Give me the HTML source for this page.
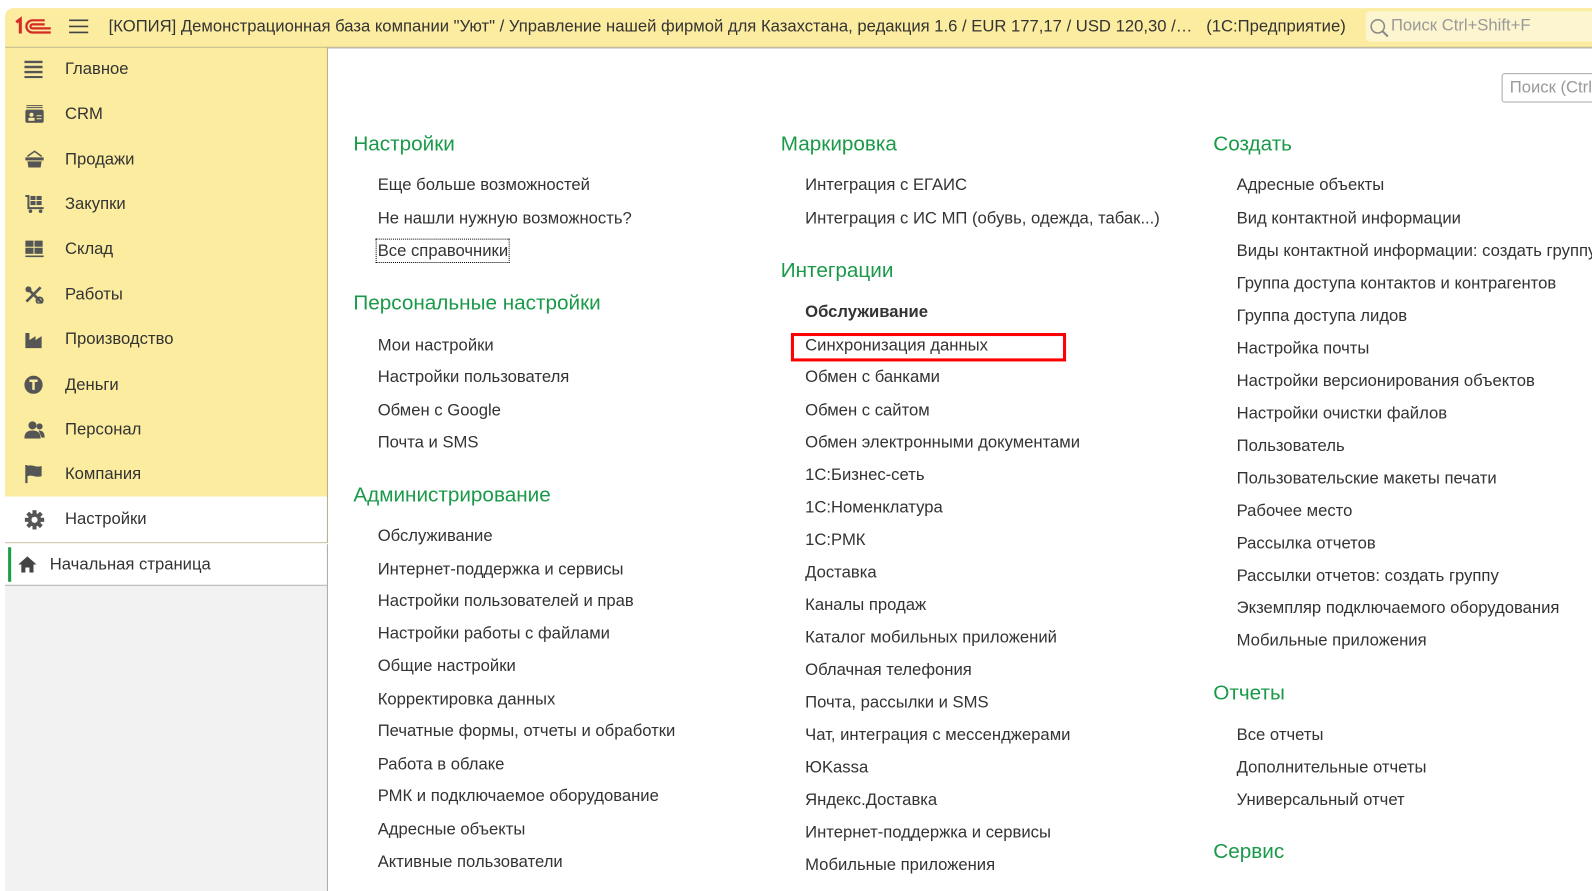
<!DOCTYPE html>
<html><head><meta charset="utf-8"><style>
*{margin:0;padding:0;box-sizing:border-box}
body{width:1592px;height:878px;background:#fff;font-family:"Liberation Sans",Arial,sans-serif;color:#333;overflow:hidden}
#w{position:relative;width:1568px;height:865px;transform:scale(1.0153);transform-origin:0 0}
.hdr{position:absolute;left:5px;top:8px;width:1600px;height:39px;background:#fbec9f;border-bottom:1px solid #a89f6e;border-top-left-radius:8px}
.hdr .t{position:absolute;left:102px;top:9px;font-size:16.4px;color:#333;white-space:nowrap}
.srch{position:absolute;left:1345px;top:11px;width:260px;height:30px;background:#fcf5cf;border-radius:4px;color:#999;font-size:16.4px;padding:5px 0 0 25px}
.side{position:absolute;left:5px;top:47px;width:318px;height:442px;background:#fbec9f;border-right:1px solid #b5ad8a}
.si{position:absolute;left:0;width:318px;height:44px;font-size:16.4px;line-height:44px;padding-left:59px;color:#333}
.si svg{position:absolute;left:19px;top:13px}
.sel{position:absolute;left:5px;top:489px;width:318px;height:46px;background:#fff;border-right:1px solid #b5ad8a;border-bottom:1px solid #c8c0a0;font-size:16.4px;line-height:44px;padding-left:59px}
.home{position:absolute;left:5px;top:536px;width:318px;height:41px;background:#fff;border-right:1px solid #aaa;border-bottom:1px solid #aaa;font-size:16.4px;line-height:40px;padding-left:44px}
.home:before{content:"";position:absolute;left:3px;top:3px;width:3px;height:34px;background:#1c9a44}
.gray{position:absolute;left:5px;top:577px;width:318px;height:301px;background:#f2f2f2;border-right:1px solid #aaa}
.topline{position:absolute;left:323px;top:47px;width:1300px;height:4px;border-top:1px solid #ccc}
.fs{position:absolute;left:1479px;top:72px;width:130px;height:29px;border:1px solid #aaa;border-radius:3px;color:#999;font-size:16.4px;padding:4px 0 0 7px}
.h{position:absolute;font-size:20.4px;color:#1a9a48;line-height:24px;white-space:nowrap}
.i{position:absolute;font-size:16.4px;color:#333;line-height:22px;white-space:nowrap}
</style></head><body><div id="w">
<div class="hdr">
<svg style="position:absolute;left:9px;top:8px" width="40" height="20" viewBox="0 0 40 20"><path d="M2 6l4-3v14" stroke="#d52a26" stroke-width="3" fill="none"/><path d="M30 4H18a6 6 0 0 0 0 12h18M30 8H18a2 2 0 0 0 0 4h18" stroke="#d52a26" stroke-width="2.2" fill="none"/></svg>
<svg style="position:absolute;left:63px;top:10px" width="19" height="16"><path d="M0 2h19M0 8h19M0 14h19" stroke="#444" stroke-width="1.6"/></svg>
<div class="t">[КОПИЯ] Демонстрационная база компании "Уют" / Управление нашей фирмой для Казахстана, редакция 1.6 / EUR 177,17 / USD 120,30 /…&nbsp;&nbsp;&nbsp;(1С:Предприятие)</div>
</div>
<div class="srch"><svg style="position:absolute;left:4px;top:7px" width="20" height="20"><circle cx="8" cy="8" r="6.5" stroke="#888" stroke-width="1.5" fill="none"/><path d="M13 13l5 5" stroke="#888" stroke-width="2"/></svg>Поиск Ctrl+Shift+F</div>
<div class="side">
<div class="si" style="top:-1px"><svg width="18" height="18"><path d="M0 2h18M0 7h18M0 12h18M0 17h18" stroke="#555" stroke-width="2.4"/></svg>Главное</div>
<div class="si" style="top:43px"><svg width="20" height="18"><rect x="1" y="5" width="18" height="13" rx="2" fill="#555"/><path d="M2 1h16M2 3h16" stroke="#555"/><circle cx="7" cy="10" r="2" fill="#fbec9f"/><rect x="4" y="13" width="6" height="3" fill="#fbec9f"/><path d="M12 11h5M12 14h5" stroke="#fbec9f"/></svg>CRM</div>
<div class="si" style="top:88px"><svg width="20" height="18"><path d="M3 6l7-5 7 5" stroke="#555" fill="none" stroke-width="1.5"/><rect x="1" y="7" width="18" height="3" fill="#555"/><path d="M3 11h14l-1 6H4z" fill="#555"/></svg>Продажи</div>
<div class="si" style="top:132px"><svg width="20" height="18"><path d="M1 1h3v12h15" stroke="#555" stroke-width="2" fill="none"/><rect x="6" y="1" width="5" height="4" fill="#555"/><rect x="12" y="1" width="5" height="4" fill="#555"/><rect x="6" y="6" width="5" height="4" fill="#555"/><rect x="12" y="6" width="5" height="4" fill="#555"/><circle cx="6" cy="16" r="1.8" fill="#555"/><circle cx="16" cy="16" r="1.8" fill="#555"/></svg>Закупки</div>
<div class="si" style="top:176px"><svg width="20" height="18"><rect x="1" y="1" width="8" height="6" fill="#555"/><rect x="10" y="1" width="8" height="6" fill="#555"/><rect x="1" y="8" width="8" height="6" fill="#555"/><rect x="10" y="8" width="8" height="6" fill="#555"/><path d="M1 16.5h18" stroke="#555" stroke-width="1.6"/></svg>Склад</div>
<div class="si" style="top:221px"><svg width="20" height="18"><path d="M2 16L16 2M3 3l14 14" stroke="#555" stroke-width="2.6"/><circle cx="4" cy="4" r="3" fill="#555"/><circle cx="15" cy="15" r="3" fill="none" stroke="#555" stroke-width="2"/></svg>Работы</div>
<div class="si" style="top:265px"><svg width="20" height="18"><path d="M1 18V3h4v7l6-4v4l6-4v12z" fill="#555"/></svg>Производство</div>
<div class="si" style="top:310px"><svg width="20" height="18"><circle cx="9" cy="9" r="9" fill="#555"/><path d="M5 5h8M9 5v9" stroke="#fbec9f" stroke-width="2.4"/></svg>Деньги</div>
<div class="si" style="top:354px"><svg width="20" height="18"><circle cx="8" cy="5" r="4" fill="#555"/><path d="M0 18c0-6 3-8 8-8s8 2 8 8z" fill="#555"/><circle cx="15" cy="6" r="3" fill="#555"/><path d="M14 10c4 0 6 2 6 7h-3z" fill="#555"/></svg>Персонал</div>
<div class="si" style="top:398px"><svg width="20" height="18"><path d="M2 0v18" stroke="#555" stroke-width="2.2"/><path d="M3 1c5-2 8 2 14 0v10c-6 2-9-2-14 0z" fill="#555"/></svg>Компания</div>
</div>
<div class="sel"><svg style="position:absolute;left:19px;top:13px" width="20" height="20" viewBox="-10 -10 20 20"><g fill="#555"><circle r="6.5"/><rect x="-2" y="-9.5" width="4" height="19"/><rect x="-2" y="-9.5" width="4" height="19" transform="rotate(45)"/><rect x="-2" y="-9.5" width="4" height="19" transform="rotate(90)"/><rect x="-2" y="-9.5" width="4" height="19" transform="rotate(135)"/></g><circle r="3" fill="#fff"/></svg>Настройки</div>
<div class="home"><svg style="position:absolute;left:13px;top:12px" width="18" height="16"><path d="M9 0L0 8h3v8h4v-5h4v5h4V8h3z" fill="#444"/></svg>Начальная страница</div>
<div class="gray"></div>
<div class="topline"></div>
<div class="fs">Поиск (Ctrl</div>

<div class="h" style="left:348px;top:130px">Настройки</div>
<div class="i" style="left:372px;top:171px">Еще больше возможностей</div>
<div class="i" style="left:372px;top:204px">Не нашли нужную возможность?</div>
<div class="i" style="left:370px;top:235px;border:1px dotted #000;padding:0 1px">Все справочники</div>
<div class="h" style="left:348px;top:287px">Персональные настройки</div>
<div class="i" style="left:372px;top:329px">Мои настройки</div>
<div class="i" style="left:372px;top:360px">Настройки пользователя</div>
<div class="i" style="left:372px;top:393px">Обмен с Google</div>
<div class="i" style="left:372px;top:425px">Почта и SMS</div>
<div class="h" style="left:348px;top:476px">Администрирование</div>
<div class="i" style="left:372px;top:517px">Обслуживание</div>
<div class="i" style="left:372px;top:550px">Интернет-поддержка и сервисы</div>
<div class="i" style="left:372px;top:581px">Настройки пользователей и прав</div>
<div class="i" style="left:372px;top:613px">Настройки работы с файлами</div>
<div class="i" style="left:372px;top:645px">Общие настройки</div>
<div class="i" style="left:372px;top:678px">Корректировка данных</div>
<div class="i" style="left:372px;top:709px">Печатные формы, отчеты и обработки</div>
<div class="i" style="left:372px;top:742px">Работа в облаке</div>
<div class="i" style="left:372px;top:773px">РМК и подключаемое оборудование</div>
<div class="i" style="left:372px;top:806px">Адресные объекты</div>
<div class="i" style="left:372px;top:838px">Активные пользователи</div>

<div class="h" style="left:769px;top:130px">Маркировка</div>
<div class="i" style="left:793px;top:171px">Интеграция с ЕГАИС</div>
<div class="i" style="left:793px;top:204px">Интеграция с ИС МП (обувь, одежда, табак...)</div>
<div class="h" style="left:769px;top:255px">Интеграции</div>
<div class="i" style="left:793px;top:296px;font-weight:bold">Обслуживание</div>
<div style="position:absolute;left:779px;top:328px;width:271px;height:28px;border:3px solid #f00"></div>
<div class="i" style="left:793px;top:329px">Синхронизация данных</div>
<div class="i" style="left:793px;top:360px">Обмен с банками</div>
<div class="i" style="left:793px;top:393px">Обмен с сайтом</div>
<div class="i" style="left:793px;top:425px">Обмен электронными документами</div>
<div class="i" style="left:793px;top:457px">1С:Бизнес-сеть</div>
<div class="i" style="left:793px;top:489px">1С:Номенклатура</div>
<div class="i" style="left:793px;top:521px">1С:РМК</div>
<div class="i" style="left:793px;top:553px">Доставка</div>
<div class="i" style="left:793px;top:585px">Каналы продаж</div>
<div class="i" style="left:793px;top:617px">Каталог мобильных приложений</div>
<div class="i" style="left:793px;top:649px">Облачная телефония</div>
<div class="i" style="left:793px;top:681px">Почта, рассылки и SMS</div>
<div class="i" style="left:793px;top:713px">Чат, интеграция с мессенджерами</div>
<div class="i" style="left:793px;top:745px">ЮKassa</div>
<div class="i" style="left:793px;top:777px">Яндекс.Доставка</div>
<div class="i" style="left:793px;top:809px">Интернет-поддержка и сервисы</div>
<div class="i" style="left:793px;top:841px">Мобильные приложения</div>

<div class="h" style="left:1195px;top:130px">Создать</div>
<div class="i" style="left:1218px;top:171px">Адресные объекты</div>
<div class="i" style="left:1218px;top:204px">Вид контактной информации</div>
<div class="i" style="left:1218px;top:236px">Виды контактной информации: создать группу</div>
<div class="i" style="left:1218px;top:268px">Группа доступа контактов и контрагентов</div>
<div class="i" style="left:1218px;top:300px">Группа доступа лидов</div>
<div class="i" style="left:1218px;top:332px">Настройка почты</div>
<div class="i" style="left:1218px;top:364px">Настройки версионирования объектов</div>
<div class="i" style="left:1218px;top:396px">Настройки очистки файлов</div>
<div class="i" style="left:1218px;top:428px">Пользователь</div>
<div class="i" style="left:1218px;top:460px">Пользовательские макеты печати</div>
<div class="i" style="left:1218px;top:492px">Рабочее место</div>
<div class="i" style="left:1218px;top:524px">Рассылка отчетов</div>
<div class="i" style="left:1218px;top:556px">Рассылки отчетов: создать группу</div>
<div class="i" style="left:1218px;top:588px">Экземпляр подключаемого оборудования</div>
<div class="i" style="left:1218px;top:620px">Мобильные приложения</div>
<div class="h" style="left:1195px;top:671px">Отчеты</div>
<div class="i" style="left:1218px;top:713px">Все отчеты</div>
<div class="i" style="left:1218px;top:745px">Дополнительные отчеты</div>
<div class="i" style="left:1218px;top:777px">Универсальный отчет</div>
<div class="h" style="left:1195px;top:827px">Сервис</div>
</div></body></html>
